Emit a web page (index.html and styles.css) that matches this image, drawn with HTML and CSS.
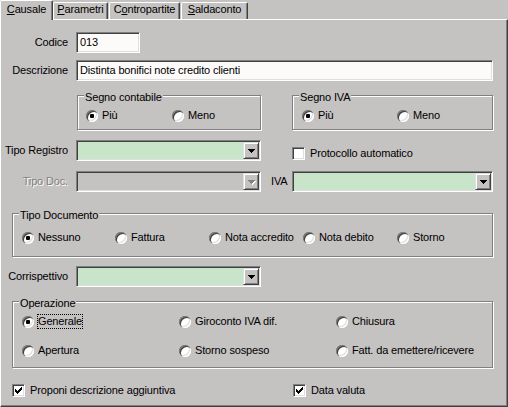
FILE: index.html
```html
<!DOCTYPE html>
<html>
<head>
<meta charset="utf-8">
<link rel="stylesheet" href="styles.css">
</head>
<body>
<div class="tabs">
  <div class="tab tab-active"><u>C</u>ausale</div>
  <div class="tab tab-par"><u>P</u>arametri</div>
  <div class="tab tab-con">C<u>o</u>ntropartite</div>
  <div class="tab tab-sal"><u>S</u>aldaconto</div>
</div>
<div class="panel">
  <div class="row row-codice">
    <span class="lbl">Codice</span>
    <div class="field w-codice">013</div>
  </div>
  <div class="row row-descr">
    <span class="lbl">Descrizione</span>
    <div class="field w-descr">Distinta bonifici note credito clienti</div>
  </div>
  <div class="row-segni">
    <div class="group g-segno1">
      <span class="legend">Segno contabile</span>
      <div class="opts pad8">
        <span class="opt w86"><span class="radio on"></span>Più</span>
        <span class="opt"><span class="radio"></span>Meno</span>
      </div>
    </div>
    <div class="group g-segno2">
      <span class="legend">Segno IVA</span>
      <div class="opts pad9">
        <span class="opt w95"><span class="radio on"></span>Più</span>
        <span class="opt"><span class="radio"></span>Meno</span>
      </div>
    </div>
  </div>
  <div class="row row-reg">
    <span class="lbl">Tipo Registro</span>
    <div class="field combo w-combo">
      <span class="btn"><svg width="7" height="4" viewBox="0 0 7 4" shape-rendering="crispEdges"><path d="M0 0h7v1h-7zM1 1h5v1h-5zM2 2h3v1h-3zM3 3h1v1h-1z" fill="#000"/></svg></span>
    </div>
    <span class="chk-item chk-proto"><span class="check"></span>Protocollo automatico</span>
  </div>
  <div class="row row-doc">
    <span class="lbl disabled">Tipo Doc.</span>
    <div class="field combo combo-off w-combo">
      <span class="btn"><svg width="8" height="5" viewBox="0 0 8 5" shape-rendering="crispEdges"><path d="M1 1h7v1h-7zM2 2h5v1h-5zM3 3h3v1h-3zM4 4h1v1h-1z" fill="#fff"/><path d="M0 0h7v1h-7zM1 1h5v1h-5zM2 2h3v1h-3zM3 3h1v1h-1z" fill="#808080"/></svg></span>
    </div>
    <span class="lbl-iva">IVA</span>
    <div class="field combo w-iva">
      <span class="btn"><svg width="7" height="4" viewBox="0 0 7 4" shape-rendering="crispEdges"><path d="M0 0h7v1h-7zM1 1h5v1h-5zM2 2h3v1h-3zM3 3h1v1h-1z" fill="#000"/></svg></span>
    </div>
  </div>
  <div class="group g-tipodoc">
    <span class="legend">Tipo Documento</span>
    <div class="opts opts-doc pad9">
      <span class="opt w93"><span class="radio on"></span>Nessuno</span>
      <span class="opt w94"><span class="radio"></span>Fattura</span>
      <span class="opt w94"><span class="radio"></span>Nota accredito</span>
      <span class="opt w94"><span class="radio"></span>Nota debito</span>
      <span class="opt"><span class="radio"></span>Storno</span>
    </div>
  </div>
  <div class="row row-corr">
    <span class="lbl">Corrispettivo</span>
    <div class="field combo w-combo">
      <span class="btn"><svg width="7" height="4" viewBox="0 0 7 4" shape-rendering="crispEdges"><path d="M0 0h7v1h-7zM1 1h5v1h-5zM2 2h3v1h-3zM3 3h1v1h-1z" fill="#000"/></svg></span>
    </div>
  </div>
  <div class="group g-oper">
    <span class="legend">Operazione</span>
    <div class="opgrid">
      <span class="opt opt-focus"><span class="radio on"></span><span class="focus">Generale</span></span>
      <span class="opt"><span class="radio"></span>Giroconto IVA dif.</span>
      <span class="opt"><span class="radio"></span>Chiusura</span>
      <span class="opt"><span class="radio"></span>Apertura</span>
      <span class="opt"><span class="radio"></span>Storno sospeso</span>
      <span class="opt"><span class="radio"></span>Fatt. da emettere/ricevere</span>
    </div>
  </div>
  <div class="row-checks">
    <span class="chk-item w281"><span class="check"><svg width="7" height="7" viewBox="0 0 7 7" shape-rendering="crispEdges"><path d="M6 0h1v1h-1zM5 1h2v1h-2zM0 2h1v1h-1zM4 2h3v1h-3zM0 3h2v1h-2zM3 3h3v1h-3zM0 4h5v1h-5zM1 5h3v1h-3zM2 6h1v1h-1z" fill="#000"/></svg></span>Proponi descrizione aggiuntiva</span>
    <span class="chk-item"><span class="check"><svg width="7" height="7" viewBox="0 0 7 7" shape-rendering="crispEdges"><path d="M6 0h1v1h-1zM5 1h2v1h-2zM0 2h1v1h-1zM4 2h3v1h-3zM0 3h2v1h-2zM3 3h3v1h-3zM0 4h5v1h-5zM1 5h3v1h-3zM2 6h1v1h-1z" fill="#000"/></svg></span>Data valuta</span>
  </div>
</div>
</body>
</html>
```

FILE: styles.css
```css
html, body {
  margin: 0;
  padding: 0;
}
body {
  width: 508px;
  height: 407px;
  overflow: hidden;
  background: #c5c2c2;
  font-family: "Liberation Sans", Arial, sans-serif;
  font-size: 11px;
  line-height: 13px;
  letter-spacing: -0.15px;
  color: #000;
}

/* Tabs */
.tabs {
  display: flex;
  align-items: flex-start;
  height: 19px;
}
.tab {
  box-sizing: border-box;
  height: 17px;
  margin-top: 2px;
  border: 1px solid #fff;
  border-bottom: 0;
  border-right-color: #404040;
  border-radius: 2px 2px 0 0;
  box-shadow: inset -1px 0 #808080;
  text-align: center;
  white-space: nowrap;
  background: #c5c2c2;
}
.tab u {
  text-underline-offset: 1px;
}
.tab-active {
  position: relative;
  z-index: 1;
  width: 53px;
  height: 20px;
  margin-top: 0;
  padding-top: 2px;
}
.tab-par { width: 55px; }
.tab-con { width: 71px; margin-left: 1px; }
.tab-sal { width: 67px; margin-left: 1px; }

/* Panel */
.panel {
  box-sizing: border-box;
  height: 388px;
  border: 1px solid #fff;
  border-right-color: #404040;
  border-bottom-color: #404040;
  box-shadow: inset -1px -1px #808080;
}

.row {
  display: flex;
  align-items: center;
  height: 21px;
}
.lbl {
  flex: none;
  width: 67px;
  margin-right: 8px;
  text-align: right;
  white-space: nowrap;
}
.disabled {
  color: #808080;
  text-shadow: 1px 1px 0 #fff;
}

.field {
  box-sizing: border-box;
  height: 21px;
  border: 1px solid;
  border-color: #808080 #fff #fff #808080;
  box-shadow: inset 1px 1px #404040, inset -1px -1px #dfdfdf;
  background: #fdfafa;
  padding: 0 3px;
  line-height: 19px;
  white-space: nowrap;
  flex: none;
}
.w-codice { width: 64px; }
.w-descr { width: 417px; }
.w-combo { width: 185px; }
.w-iva { width: 201px; }

.combo {
  display: flex;
  justify-content: flex-end;
  padding: 1px;
  background: #c9e5c9;
}
.combo-off {
  background: #c5c2c2;
}
.btn {
  box-sizing: border-box;
  width: 16px;
  height: 17px;
  display: flex;
  align-items: center;
  justify-content: center;
  background: #c5c2c2;
  border: 1px solid #dfdfdf;
  border-right-color: #404040;
  border-bottom-color: #404040;
  box-shadow: inset 1px 1px #fff, inset -1px -1px #808080;
}
.btn svg {
  display: block;
}
.combo-off .btn svg {
  margin-left: 1px;
  margin-top: 1px;
}

.row-codice { margin-top: 12px; }
.row-descr { margin-top: 7px; }
.row-segni {
  display: flex;
  align-items: flex-start;
  margin-top: 14px;
  padding-left: 76px;
}
.row-reg { margin-top: 10px; }
.row-doc { margin-top: 10px; }
.row-corr { margin-top: 9px; }

.lbl-iva {
  flex: none;
  width: 21px;
  margin-left: 10px;
}

/* Group boxes */
.group {
  box-sizing: border-box;
  border: 1px solid #808080;
  box-shadow: inset 1px 1px #fff, 1px 1px #fff;
}
.legend {
  display: block;
  width: max-content;
  margin: -5px 0 0 6px;
  padding: 0 1px;
  background: #c5c2c2;
  white-space: nowrap;
}
.g-segno1 { width: 184px; height: 35px; }
.g-segno2 { width: 201px; height: 35px; margin-left: 31px; }
.g-tipodoc {
  width: 481px;
  height: 44px;
  margin-top: 21px;
  margin-left: 11px;
}
.g-oper {
  width: 481px;
  height: 67px;
  margin-top: 14px;
  margin-left: 11px;
}

.opts {
  display: flex;
  margin-top: 5px;
}
.opts-doc { margin-top: 9px; }
.pad8 { padding-left: 8px; }
.pad9 { padding-left: 9px; }
.opt {
  display: flex;
  align-items: center;
  gap: 4px;
  white-space: nowrap;
  flex: none;
}
.w86 { width: 86px; }
.w95 { width: 95px; }
.w93 { width: 93px; }
.w94 { width: 94px; }

.opgrid {
  display: grid;
  grid-template-columns: 157px 157px auto;
  row-gap: 16px;
  margin-top: 5px;
  padding-left: 9px;
}
.focus {
  outline: 1px dotted #000;
  outline-offset: 0;
}

.radio {
  box-sizing: border-box;
  flex: none;
  width: 12px;
  height: 12px;
  border-radius: 50%;
  background: #fff;
  box-shadow: inset 1px 1px #808080, inset 2px 2px #404040, inset -1px -1px #fff, inset -2px -2px #dfdfdf;
  display: grid;
  place-items: center;
}
.radio.on::after {
  content: "";
  width: 4px;
  height: 4px;
  border-radius: 1px;
  background: #000;
}

/* Checkboxes */
.chk-item {
  display: flex;
  align-items: center;
  gap: 5px;
  white-space: nowrap;
  flex: none;
}
.chk-proto {
  align-self: flex-start;
  margin-top: 7px;
  margin-left: 31px;
}
.check {
  box-sizing: border-box;
  flex: none;
  width: 13px;
  height: 13px;
  border: 1px solid;
  border-color: #808080 #fff #fff #808080;
  box-shadow: inset 1px 1px #404040, inset -1px -1px #dfdfdf;
  background: #fff;
  display: grid;
  place-items: center;
}
.check svg {
  display: block;
}
.row-checks {
  display: flex;
  margin-top: 16px;
  padding-left: 11px;
}
.w281 { width: 281px; }
```
